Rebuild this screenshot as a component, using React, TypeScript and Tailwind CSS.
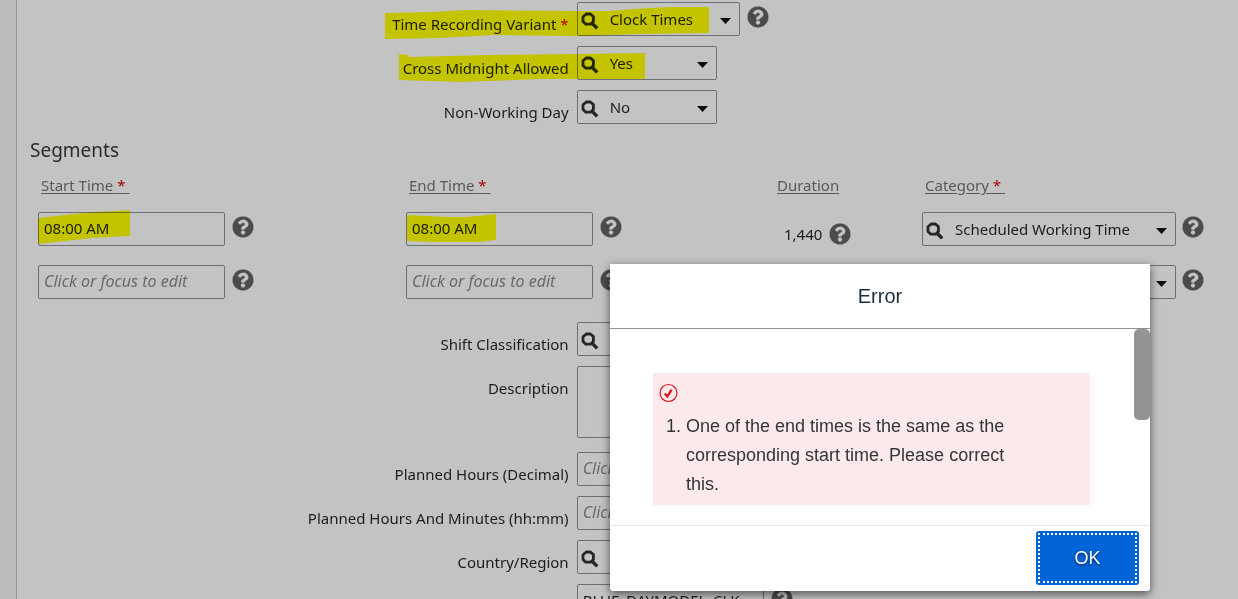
import type {ReactNode} from "react";
import {FaQuestionCircle} from "react-icons/fa";

const PLACEHOLDER = "Click or focus to edit";

const SearchIcon: React.FC = () => (
    <svg viewBox="0 0 18 18" className="pointer-events-none absolute left-1 top-[10px] h-[18px] w-[18px]" fill="none" stroke="#262626">
        <path d="M5.2 2h4.2l3 2.6v4.8l-2.8 2.8H4.8L2 9.4V4.8z" strokeWidth="2.8" strokeLinejoin="round" />
        <path d="M10.6 10.8l5.6 5.6" strokeWidth="3.4" />
    </svg>
);

const HelpButton: React.FC<{ className?: string }> = ({ className = "mt-1" }) => (
    <button type="button" aria-label="Help" className={`h-[22px] w-[22px] shrink-0 text-[#4b4b4b] ${className}`}>
        <FaQuestionCircle className="h-[22px] w-[22px]" stroke="#c3c3c3" strokeWidth="8" />
    </button>
);

// Marker strokes tint whatever lies beneath them
const Marker: React.FC<{ points: string; className?: string }> = ({ points, className = "left-0" }) => (
    <svg className={`pointer-events-none absolute top-0 h-10 w-[330px] overflow-visible mix-blend-multiply ${className}`} viewBox="0 0 330 40">
        <polygon points={points} fill="#ffff00" />
    </svg>
);

const SelectBox: React.FC<{ id: string; value?: string; width?: string; label?: string; children?: ReactNode }> = ({ id, value = "", width = "w-[140px]", label, children }) => (
    <div className={`relative h-[34px] shrink-0 ${width}`}>
        <select
            id={id}
            aria-label={label}
            className="h-full w-full appearance-none rounded-[2px] border border-[#6b7078] bg-transparent pl-8 pr-6 pt-px text-[15px] text-[#1c1c1c]"
        >
            <option>{value}</option>
        </select>
        <SearchIcon />
        <svg viewBox="0 0 11 6" className="pointer-events-none absolute right-[9px] top-4 h-[6px] w-[11px]">
            <path d="M0 0h11L5.5 6z" fill="#0c0c0c" />
        </svg>
        {children}
    </div>
);

const TextBox: React.FC<{ id: string; value?: string; label?: string; children?: ReactNode }> = ({ id, value, label, children }) => (
    <div className="relative h-[34px] w-[187px] shrink-0">
        <input
            id={id}
            type="text"
            aria-label={label}
            defaultValue={value}
            placeholder={PLACEHOLDER}
            className="h-full w-full rounded-[2px] border border-[#6b7078] bg-transparent px-[5px] pb-[2px] text-[15px] text-[#1c1c1c] placeholder:text-base placeholder:italic placeholder:text-[#6a6a6a]"
        />
        {children}
    </div>
);

const FormRow: React.FC<{ id: string; label: string; required?: boolean; children: ReactNode }> = ({ id, label, required, children }) => (
    <div className="flex">
        <label htmlFor={id} className="w-11/24 shrink-0 pr-2 pt-3 text-right leading-5">
            {label}
            {required && <span className="text-[#c00000]"> *</span>}
        </label>
        <div className="flex gap-[7px]">{children}</div>
    </div>
);

const HeaderLink: React.FC<{ text: string; required?: boolean }> = ({ text, required }) => (
    <a href="#" className="ml-[3px] text-[#595959] underline underline-offset-2">
        {text}
        {required && <>{" "}<span className="text-[#a80000]">*</span>&nbsp;</>}
    </a>
);

const SegmentsTable: React.FC = () => (
    <table className="w-full table-fixed border-collapse text-left">
        <colgroup>
            <col className="w-[368px]" />
            <col className="w-[368px]" />
            <col className="w-[148px]" />
            <col />
        </colgroup>
        <thead>
            <tr className="h-[38px] align-top">
                <th className="font-normal"><HeaderLink text="Start Time" required /></th>
                <th className="font-normal"><HeaderLink text="End Time" required /></th>
                <th className="font-normal"><HeaderLink text="Duration" /></th>
                <th className="font-normal"><HeaderLink text="Category" required /></th>
            </tr>
        </thead>
        <tbody>
            <tr className="h-[53px] align-top">
                <td>
                    <div className="flex gap-[7px]">
                        <TextBox id="start-1" label="Start Time 1" value="08:00 AM">
                            <Marker points="0,6 45,1 92,-2 92,24 54,26 0,32" />
                        </TextBox>
                        <HelpButton />
                    </div>
                </td>
                <td>
                    <div className="flex gap-[7px]">
                        <TextBox id="end-1" label="End Time 1" value="08:00 AM">
                            <Marker points="1,3 42,5 60,5 90,2 90,28 72,30 27,30 1,29" />
                        </TextBox>
                        <HelpButton />
                    </div>
                </td>
                <td>
                    <div className="flex items-center gap-[7px] pl-[10px] pt-[11px]">
                        1,440
                        <HelpButton className="" />
                    </div>
                </td>
                <td>
                    <div className="flex gap-[6px]">
                        <SelectBox id="category-1" label="Category 1" value="Scheduled Working Time" width="w-[254px]" />
                        <HelpButton />
                    </div>
                </td>
            </tr>
            <tr className="h-[34px] align-top">
                <td>
                    <div className="flex gap-[7px]">
                        <TextBox id="start-2" label="Start Time 2" />
                        <HelpButton />
                    </div>
                </td>
                <td>
                    <div className="flex gap-[7px]">
                        <TextBox id="end-2" label="End Time 2" />
                        <HelpButton />
                    </div>
                </td>
                <td />
                <td>
                    <div className="flex gap-[6px]">
                        <SelectBox id="category-2" label="Category 2" width="w-[254px]" />
                        <HelpButton />
                    </div>
                </td>
            </tr>
        </tbody>
    </table>
);

const ErrorDialog: React.FC = () => (
    <div
        role="alertdialog"
        aria-labelledby="error-title"
        className="absolute left-[610px] top-[264px] flex w-[540px] flex-col rounded-b-[3px] bg-white font-['Liberation_Sans',Arial,sans-serif] shadow-[0_3px_10px_rgba(0,0,0,0.6)]"
    >
        <h2 id="error-title" className="border-b border-[#919191] pb-[18px] pt-[18px] text-center text-xl text-[#1d2d3e]">
            Error
        </h2>
        <div className="flex justify-between pl-[43px]">
            <div className="mb-5 mt-11 w-[437px] bg-[#fbe9eb] px-[6px] pb-[6px] pt-[10px] text-lg leading-[29px] text-[#32363a]">
                <svg viewBox="0 0 20 20" className="h-5 w-5" fill="none" stroke="#d9121f">
                    <circle cx="9.5" cy="10" r="8.5" strokeWidth="1.2" />
                    <path d="M5.8 10.6l2.6 2.8 4.2-6.8" strokeWidth="2.3" />
                </svg>
                <ol className="list-decimal pl-[27px] pr-[70px] pt-[9px]">
                    <li>One of the end times is the same as the corresponding start time. Please correct this.</li>
                </ol>
            </div>
            <div className="h-[91px] w-4 rounded-[5px] bg-[#949494]" />
        </div>
        <div className="flex justify-end border-t border-[#e8e8e8] pb-[6px] pr-[11px] pt-[5px]">
            <button
                type="button"
                className="h-[54px] w-[103px] rounded-[3px] bg-[#0064d9] p-[2px] text-lg text-white [text-shadow:0_1px_3px_rgba(0,0,0,0.7)]"
            >
                <span className="flex h-full items-center justify-center border-2 border-dotted border-white">OK</span>
            </button>
        </div>
    </div>
);

export default function App() {
    return (
        <div className="relative flex h-screen overflow-hidden bg-[#c3c3c3] font-['Noto_Sans',sans-serif] text-[15px] text-[#1c1c1c]">
            <div className="w-[17px] shrink-0 border-r border-[#8f969e] bg-[#babcba]" />
            <main className="min-w-0 flex-1 pt-[2px]">
                <div className="flex flex-col gap-[10px]">
                    <FormRow id="variant" label="Time Recording Variant" required>
                        <SelectBox id="variant" value="Clock Times" width="w-[163px]">
                            <Marker
                                className="-left-48"
                                points="0,11 47,10 80,8 192,9 225,9 248,7 285,5 324,5 324,31 255,32 195,34 108,33 55,36 0,37"
                            />
                        </SelectBox>
                        <HelpButton />
                    </FormRow>
                    <FormRow id="midnight" label="Cross Midnight Allowed">
                        <SelectBox id="midnight" value="Yes">
                            <Marker
                                className="-left-[178px]"
                                points="0,8 9,9 9,11 91,9 178,8 246,7 246,33 141,33 61,36 0,34"
                            />
                        </SelectBox>
                    </FormRow>
                    <FormRow id="non-working" label="Non-Working Day">
                        <SelectBox id="non-working" value="No" />
                    </FormRow>
                </div>

                <h1 className="pl-[13px] pt-3 text-[19px] leading-7 text-[#2a2a2a]">Segments</h1>
                <div className="pl-[21px] pt-[10px]">
                    <SegmentsTable />
                </div>

                <div className="mt-[23px] flex flex-col gap-[10px]">
                    <FormRow id="shift" label="Shift Classification">
                        <SelectBox id="shift" />
                    </FormRow>
                    <FormRow id="description" label="Description">
                        <textarea id="description" className="mb-1 block h-[72px] w-[300px] resize-none rounded-[2px] border border-[#6b7078] px-[6px]" />
                    </FormRow>
                    <FormRow id="hours" label="Planned Hours (Decimal)">
                        <TextBox id="hours" />
                    </FormRow>
                    <FormRow id="hours-minutes" label="Planned Hours And Minutes (hh:mm)">
                        <TextBox id="hours-minutes" />
                    </FormRow>
                    <FormRow id="country" label="Country/Region">
                        <SelectBox id="country" />
                    </FormRow>
                    <FormRow id="external-code" label="">
                        <TextBox id="external-code" value="BLUE_DAYMODEL_CLK" />
                        <HelpButton />
                    </FormRow>
                </div>
            </main>
            <ErrorDialog />
        </div>
    );
}
